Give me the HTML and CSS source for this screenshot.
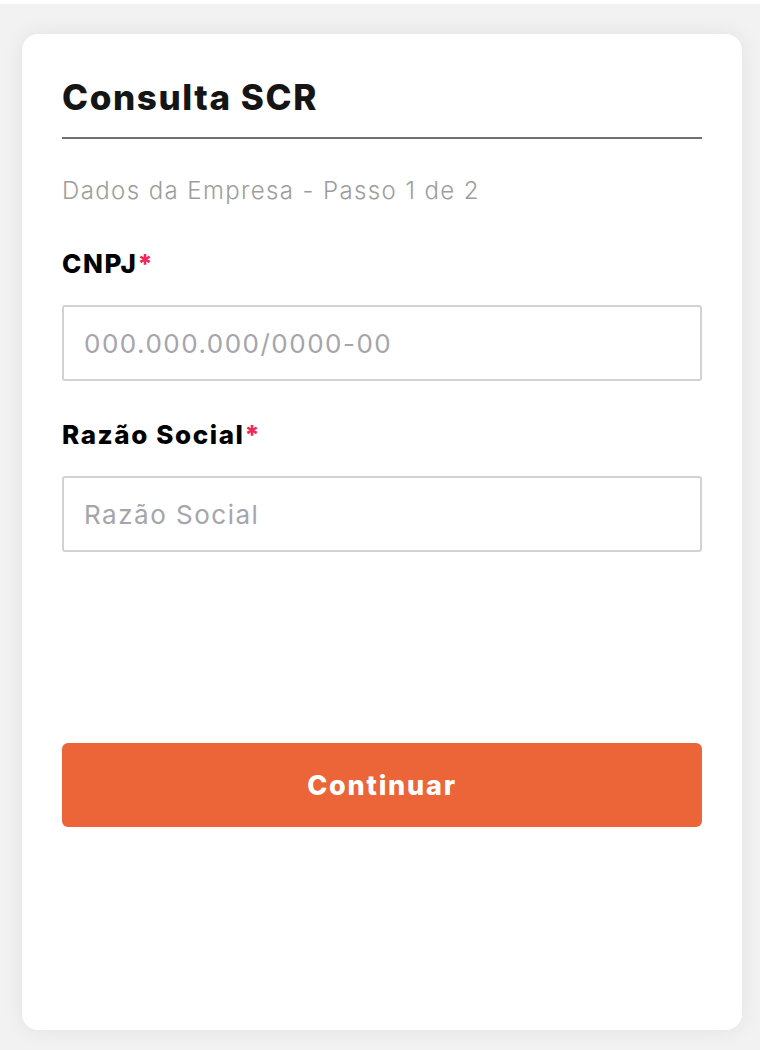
FILE: index.html
```html
<!DOCTYPE html>
<html lang="pt-BR">
<head>
<meta charset="utf-8">
<title>Consulta SCR</title>
<link rel="stylesheet" href="styles.css">
</head>
<body>
<div class="page">
  <main class="card">
    <h1 class="title">Consulta SCR</h1>
    <hr class="divider">
    <p class="step">Dados da Empresa - Passo 1 de 2</p>
    <form class="form">
      <div class="field">
        <label class="label" for="cnpj">CNPJ<span class="req">*</span></label>
        <input class="input" id="cnpj" type="text" placeholder="000.000.000/0000-00">
      </div>
      <div class="field">
        <label class="label" for="razao">Razão Social<span class="req">*</span></label>
        <input class="input" id="razao" type="text" placeholder="Razão Social">
      </div>
      <button class="btn" type="button">Continuar</button>
    </form>
  </main>
</div>
</body>
</html>
```

FILE: styles.css
```css
html, body {
  margin: 0;
  padding: 0;
  background: #ffffff;
}
body {
  font-family: "Inter", "Open Sans", "Liberation Sans", sans-serif;
}
.page {
  margin-top: 4px;
  height: 1046px;
  box-sizing: border-box;
  background: #f2f2f2;
  padding: 30px 18px 0 22px;
}
.card {
  width: 720px;
  height: 996px;
  box-sizing: border-box;
  background: #ffffff;
  border-radius: 16px;
  box-shadow: 0 0 22px rgba(0, 0, 0, 0.07);
  padding: 41px 40px 0 40px;
}
.title {
  margin: 0;
  font-size: 35px;
  line-height: 44px;
  font-weight: 800;
  color: #151515;
  letter-spacing: 1.6px;
}
.divider {
  margin: 18px 0 0 0;
  border: 0;
  height: 2px;
  background: #707070;
}
.step {
  margin: 38px 0 0 0;
  font-size: 24px;
  line-height: 28px;
  font-weight: 300;
  color: #9d9d9d;
  letter-spacing: 1.4px;
}
.form {
  display: flex;
  flex-direction: column;
}
.field {
  display: flex;
  flex-direction: column;
  margin-top: 44px;
}
.field + .field {
  margin-top: 39px;
}
.label {
  font-size: 26px;
  line-height: 30px;
  font-weight: 800;
  color: #000000;
  margin-bottom: 26px;
  letter-spacing: 1.6px;
}
.req {
  color: #f5245a;
  letter-spacing: 0;
}
.input {
  height: 76px;
  box-sizing: border-box;
  border: 2px solid #d2d2d2;
  border-radius: 3px;
  padding: 0 20px;
  font-family: inherit;
  font-size: 26px;
  font-weight: 400;
  color: #333;
  background: #fff;
  outline: none;
  letter-spacing: 1.5px;
}
.input::placeholder {
  color: #a5a5ad;
}
.btn {
  margin-top: 191px;
  height: 84px;
  border: 0;
  border-radius: 6px;
  background: #eb6538;
  color: #ffffff;
  font-family: inherit;
  font-size: 27px;
  font-weight: 800;
  letter-spacing: 1.8px;
  cursor: pointer;
}
```
